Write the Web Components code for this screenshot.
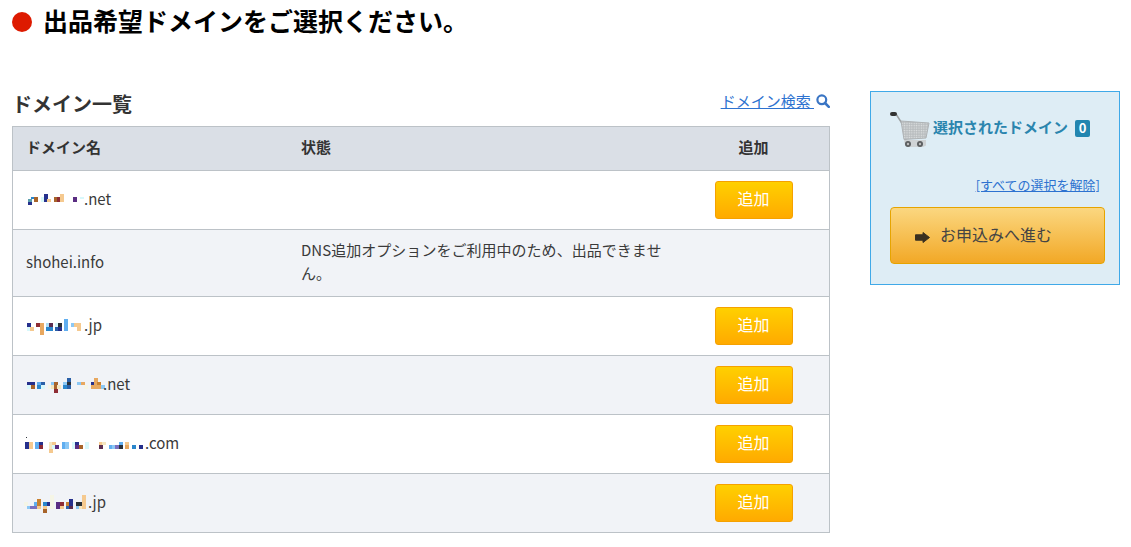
<!DOCTYPE html>
<html lang="ja">
<head>
<meta charset="utf-8">
<title>出品希望ドメイン</title>
<style>
  html, body { margin: 0; background: #fff; }
  body { font-family: "Noto Sans CJK JP", "Noto Sans", sans-serif; color: #333; }
</style>
</head>
<body>
<listing-page>
  <page-title slot="top">出品希望ドメインをご選択ください。</page-title>
  <domain-table>
    <domain-row addable>
      <pixel-mosaic slot="name" w="58" h="16" ox="6" data="12 30 9 9 t;21 24 9 6 b;30 24 9 15 r;12 39 9 9 n;51 24 9 15 c;60 15 9 24 n;69 30 9 9 p;90 24 9 15 r;99 24 9 15 m;108 15 9 24 p;147 24 9 15 u;168 24 9 6 c"></pixel-mosaic>
      <span slot="name">.net</span>
    </domain-row>
    <domain-row alt>
      <span slot="name">shohei.info</span>
      <span slot="status">DNS追加オプションをご利用中のため、出品できません。</span>
    </domain-row>
    <domain-row addable>
      <pixel-mosaic slot="name" w="58" h="16" ox="6" data="9 24 9 12 n;9 36 9 12 c;18 36 9 12 p;36 24 12 12 m;48 24 9 36 o;66 24 9 12 a;66 36 9 12 b;75 24 9 12 v;75 36 9 12 b;93 24 9 12 c;93 36 9 12 k;102 24 9 12 d;102 36 9 12 n;120 12 9 36 l;141 24 9 12 s;150 24 9 12 p;159 24 9 24 p"></pixel-mosaic>
      <span slot="name">.jp</span>
    </domain-row>
    <domain-row addable alt>
      <pixel-mosaic slot="name" w="77" h="16" ox="6" data="9 24 12 9 n;21 24 9 9 n;9 33 12 12 c;21 33 9 12 r;39 24 12 9 l;51 24 9 9 k;39 33 12 12 b;51 33 9 12 c;72 33 9 12 y;81 24 9 9 s;81 33 9 12 e;90 24 9 21 r;90 45 9 12 m;99 33 12 12 e;117 24 12 9 s;117 33 12 12 b;129 12 12 12 k;129 24 12 9 d;129 33 12 12 k;159 24 12 9 s;171 24 9 9 o;180 33 9 12 y;201 24 9 9 n;201 33 9 12 o;210 12 9 33 o;219 24 12 9 g;219 33 12 12 o;231 33 9 12 s"></pixel-mosaic>
      <span slot="name">.net</span>
    </domain-row>
    <domain-row addable>
      <pixel-mosaic slot="name" w="119" h="15" ox="12" data="12 9 3 3 d;9 24 12 21 n;21 24 9 21 p;39 24 12 21 l;51 24 9 9 n;51 33 9 12 m;81 24 9 9 e;90 24 9 9 p;81 33 9 12 e;90 33 9 12 c;99 33 12 12 u;81 45 9 12 p;120 24 9 21 l;129 24 12 21 s;150 24 9 21 c;159 24 12 9 n;159 33 12 12 u;171 33 9 12 r;189 24 12 21 c;231 24 9 9 p;240 24 9 9 e;231 33 9 12 v;261 33 9 12 l;270 33 9 12 s;279 33 12 12 w;291 24 9 9 l;291 33 9 12 d;309 24 12 9 p;309 33 12 12 o;330 33 9 12 b;351 33 9 12 n"></pixel-mosaic>
      <span slot="name">.com</span>
    </domain-row>
    <domain-row addable alt>
      <pixel-mosaic slot="name" w="62" h="17" ox="12" data="6 33 9 12 y;15 45 9 9 s;24 45 12 9 w;36 33 9 12 l;36 45 9 9 w;45 24 9 21 g;45 45 9 9 p;63 33 12 12 b;75 33 9 12 n;63 45 12 9 p;63 54 12 12 r;84 12 9 42 y;102 33 12 21 u;114 33 9 12 m;114 45 9 9 p;132 33 9 12 g;132 45 9 9 k;141 24 12 21 n;141 45 12 9 v;162 33 18 12 d;162 45 9 9 s;171 45 9 9 e;180 12 12 42 p"></pixel-mosaic>
      <span slot="name">.jp</span>
    </domain-row>
  </domain-table>
  <cart-panel slot="side"></cart-panel>
</listing-page>

<script>
class ListingPage extends HTMLElement {
  constructor() {
    super();
    this.attachShadow({mode: 'open'}).innerHTML = `
    <style>
      :host { display: block; padding: 0 11px 0 12px; height: 547px; box-sizing: border-box; overflow: hidden; }
      .cols { display: flex; gap: 40px; align-items: flex-start; }
      .left { width: 818px; flex: none; }
      .side { width: 250px; flex: none; }
    </style>
    <slot name="top"></slot>
    <div class="cols">
      <div class="left"><slot></slot></div>
      <div class="side"><slot name="side"></slot></div>
    </div>`;
  }
}

class PageTitle extends HTMLElement {
  constructor() {
    super();
    this.attachShadow({mode: 'open'}).innerHTML = `
    <style>
      :host { display: flex; align-items: center; gap: 11px; height: 91px; box-sizing: border-box; padding-bottom: 47px; font-size: 25px; font-weight: 700; color: #000; }
      i { width: 20px; height: 20px; border-radius: 50%; background: #dd1a00; flex: none; }
      span { margin-bottom: 5px; }
    </style>
    <i></i><span><slot></slot></span>`;
  }
}

class DomainTable extends HTMLElement {
  constructor() {
    super();
    this.attachShadow({mode: 'open'}).innerHTML = `
    <style>
      :host { display: block; font-size: 15px; }
      .head { display: flex; justify-content: space-between; align-items: flex-start; height: 35px; }
      h2 { margin: 0; font-size: 20px; font-weight: 700; line-height: 26px; color: #333; }
      a { color: #2d72d0; font-size: 15px; line-height: 20px; display: flex; align-items: center; gap: 2px; text-decoration: none; }
      a span { text-decoration: underline; white-space: pre; }
      .box { border: 1px solid #bcc2c7; border-bottom: 0; }
      .cols { display: grid; grid-template-columns: 275px 390px 151px; height: 43px; align-items: center; background: #dadfe6; border-bottom: 1px solid #bcc2c7; font-weight: 700; color: #333; }
      .cols div { padding: 0 0 4px 13px; }
      .cols div:last-child { padding: 0 0 4px; text-align: center; }
    </style>
    <div class="head">
      <h2>ドメイン一覧</h2>
      <a href="#"><span>ドメイン検索 </span>
        <svg width="14" height="14" viewBox="0 0 14 14"><circle cx="5.8" cy="5.8" r="4.4" fill="none" stroke="#3a75c4" stroke-width="2.2"/><path d="M9 9l3.8 3.8" stroke="#3a75c4" stroke-width="2.6" stroke-linecap="round"/></svg>
      </a>
    </div>
    <div class="box">
      <div class="cols"><div>ドメイン名</div><div>状態</div><div>追加</div></div>
      <slot></slot>
    </div>`;
  }
}

class DomainRow extends HTMLElement {
  constructor() {
    super();
    const btn = this.hasAttribute('addable') ? '<add-button>追加</add-button>' : '';
    this.attachShadow({mode: 'open'}).innerHTML = `
    <style>
      :host { display: grid; grid-template-columns: 275px 390px 151px; align-items: center; padding: 10px 0; min-height: 38px; background: #fff; border-bottom: 1px solid #bcc2c7; color: #3a3a3a; line-height: 23px; }
      :host([alt]) { background: #f1f3f7; }
      .name { padding-left: 13px; white-space: nowrap; margin: -2px 0 2px; }
      .status { padding: 0 6px 0 13px; margin: -2px 0 2px; letter-spacing: .03px; }
      .add { display: flex; justify-content: center; }
    </style>
    <div class="name"><slot name="name"></slot></div>
    <div class="status"><slot name="status"></slot></div>
    <div class="add">${btn}</div>`;
  }
}

const mosaicColors = {n:'#26308c',b:'#2a86cc',l:'#60aef0',s:'#8cc8f5',c:'#d8f8fb',p:'#f5c98f',o:'#e8a860',r:'#a8642a',m:'#8e2c34',u:'#5a2d82',d:'#2a3038',y:'#f5f5e6',g:'#c88030',k:'#2a60a8',w:'#7a70c0',t:'#5b9fae',a:'#b0dff5',v:'#5a2d50',e:'#f5e6c0'};

// the blurred out part of a domain name, a few coloured blocks
class PixelMosaic extends HTMLElement {
  constructor() {
    super();
    const w = +this.getAttribute('w'), h = +this.getAttribute('h'), ox = +this.getAttribute('ox');
    const rects = this.getAttribute('data').split(';').map(r => {
      const p = r.split(' ');
      const bw = +p[2] === 9 ? 10.5 : p[2];
      return `<rect x="${p[0]}" y="${p[1]}" width="${bw}" height="${p[3]}" fill="${mosaicColors[p[4]]}"/>`;
    }).join('');
    this.attachShadow({mode: 'open'}).innerHTML = `
    <style>
      :host { display: inline-block; }
      svg { display: block; overflow: visible; }
    </style>
    <svg width="${w}" height="${h}" viewBox="${ox} 0 ${w * 3} ${h * 3}" shape-rendering="crispEdges">${rects}</svg>`;
  }
}

class AddButton extends HTMLElement {
  constructor() {
    super();
    this.attachShadow({mode: 'open'}).innerHTML = `
    <style>
      :host { display: flex; align-items: center; justify-content: center; width: 78px; height: 38px; box-sizing: border-box; padding-bottom: 4px; border: 1px solid #f5a100; border-radius: 3px; background: linear-gradient(#ffd000, #ffaa00); color: #fff; font-size: 16px; }
    </style>
    <slot></slot>`;
  }
}

class CartPanel extends HTMLElement {
  constructor() {
    super();
    this.attachShadow({mode: 'open'}).innerHTML = `
    <style>
      :host { display: block; box-sizing: border-box; height: 194px; padding: 18px 14px 20px 18px; background: #deedf5; border: 1px solid #3fa9e8; }
      .head { display: flex; align-items: center; height: 38px; }
      .head svg { flex: none; margin-right: 2px; }
      b { font-size: 15px; color: #2a85ae; line-height: 20px; margin-bottom: 4px; }
      em { font-style: normal; font-weight: 700; font-size: 13px; background: #2286b0; color: #fff; width: 15px; height: 17px; line-height: 15px; text-align: center; border-radius: 2px; margin: 0 0 1px 7px; }
      .clear { display: block; text-align: right; font-size: 13px; line-height: 20px; margin: 27px 5px 12px 0; color: #2d72d0; }
      .go { display: flex; align-items: center; gap: 10px; height: 57px; box-sizing: border-box; margin-left: 1px; padding: 0 0 4px 24px; border: 1px solid #e6a400; border-radius: 4px; background: linear-gradient(#fbd780, #f2a826); color: #444; font-size: 16px; }
      .go svg { margin-top: 7px; }
    </style>
    <div class="head">
      <svg width="42" height="38" viewBox="0 0 42 38">
        <defs>
          <pattern id="dots" width="2.4" height="2.4" patternUnits="userSpaceOnUse"><rect width="2.4" height="2.4" fill="#b9bdbf"/><circle cx="1.2" cy="1.2" r=".7" fill="#dfe2e3"/></pattern>
          <filter id="soft"><feGaussianBlur stdDeviation=".45"/></filter>
        </defs>
        <g filter="url(#soft)">
          <path d="M15 30h22v5.5l-3 1.5H19l-3-1.500z" fill="#cfd3d5"/>
          <path d="M7 4l7 11 3 15" fill="none" stroke="#9da1a3" stroke-width="1.500"/>
          <path d="M12 11l28 2-3 15-22 1.500z" fill="url(#dots)" stroke="#aeb2b4" stroke-width="1"/>
          <rect x="1" y="2" width="7" height="4" rx="2" fill="#333"/>
          <circle cx="19" cy="34" r="3" fill="#5c5f60"/><circle cx="19" cy="34" r="1.2" fill="#bdbdbd"/>
          <circle cx="31" cy="34" r="3" fill="#5c5f60"/><circle cx="31" cy="34" r="1.2" fill="#bdbdbd"/>
        </g>
      </svg>
      <b>選択されたドメイン</b><em>0</em>
    </div>
    <a class="clear" href="#">[すべての選択を解除]</a>
    <div class="go">
      <svg width="15" height="11" viewBox="0 0 15 11"><path d="M.5 2.8h7.500V.5l6.500 5L8 10.500V8.200H.5z" fill="#3a3020" stroke="#3a3020" stroke-width="1" stroke-linejoin="round"/></svg>
      <span>お申込みへ進む</span>
    </div>`;
  }
}

customElements.define('listing-page', ListingPage);
customElements.define('page-title', PageTitle);
customElements.define('domain-table', DomainTable);
customElements.define('domain-row', DomainRow);
customElements.define('pixel-mosaic', PixelMosaic);
customElements.define('add-button', AddButton);
customElements.define('cart-panel', CartPanel);
</script>
</body>
</html>
